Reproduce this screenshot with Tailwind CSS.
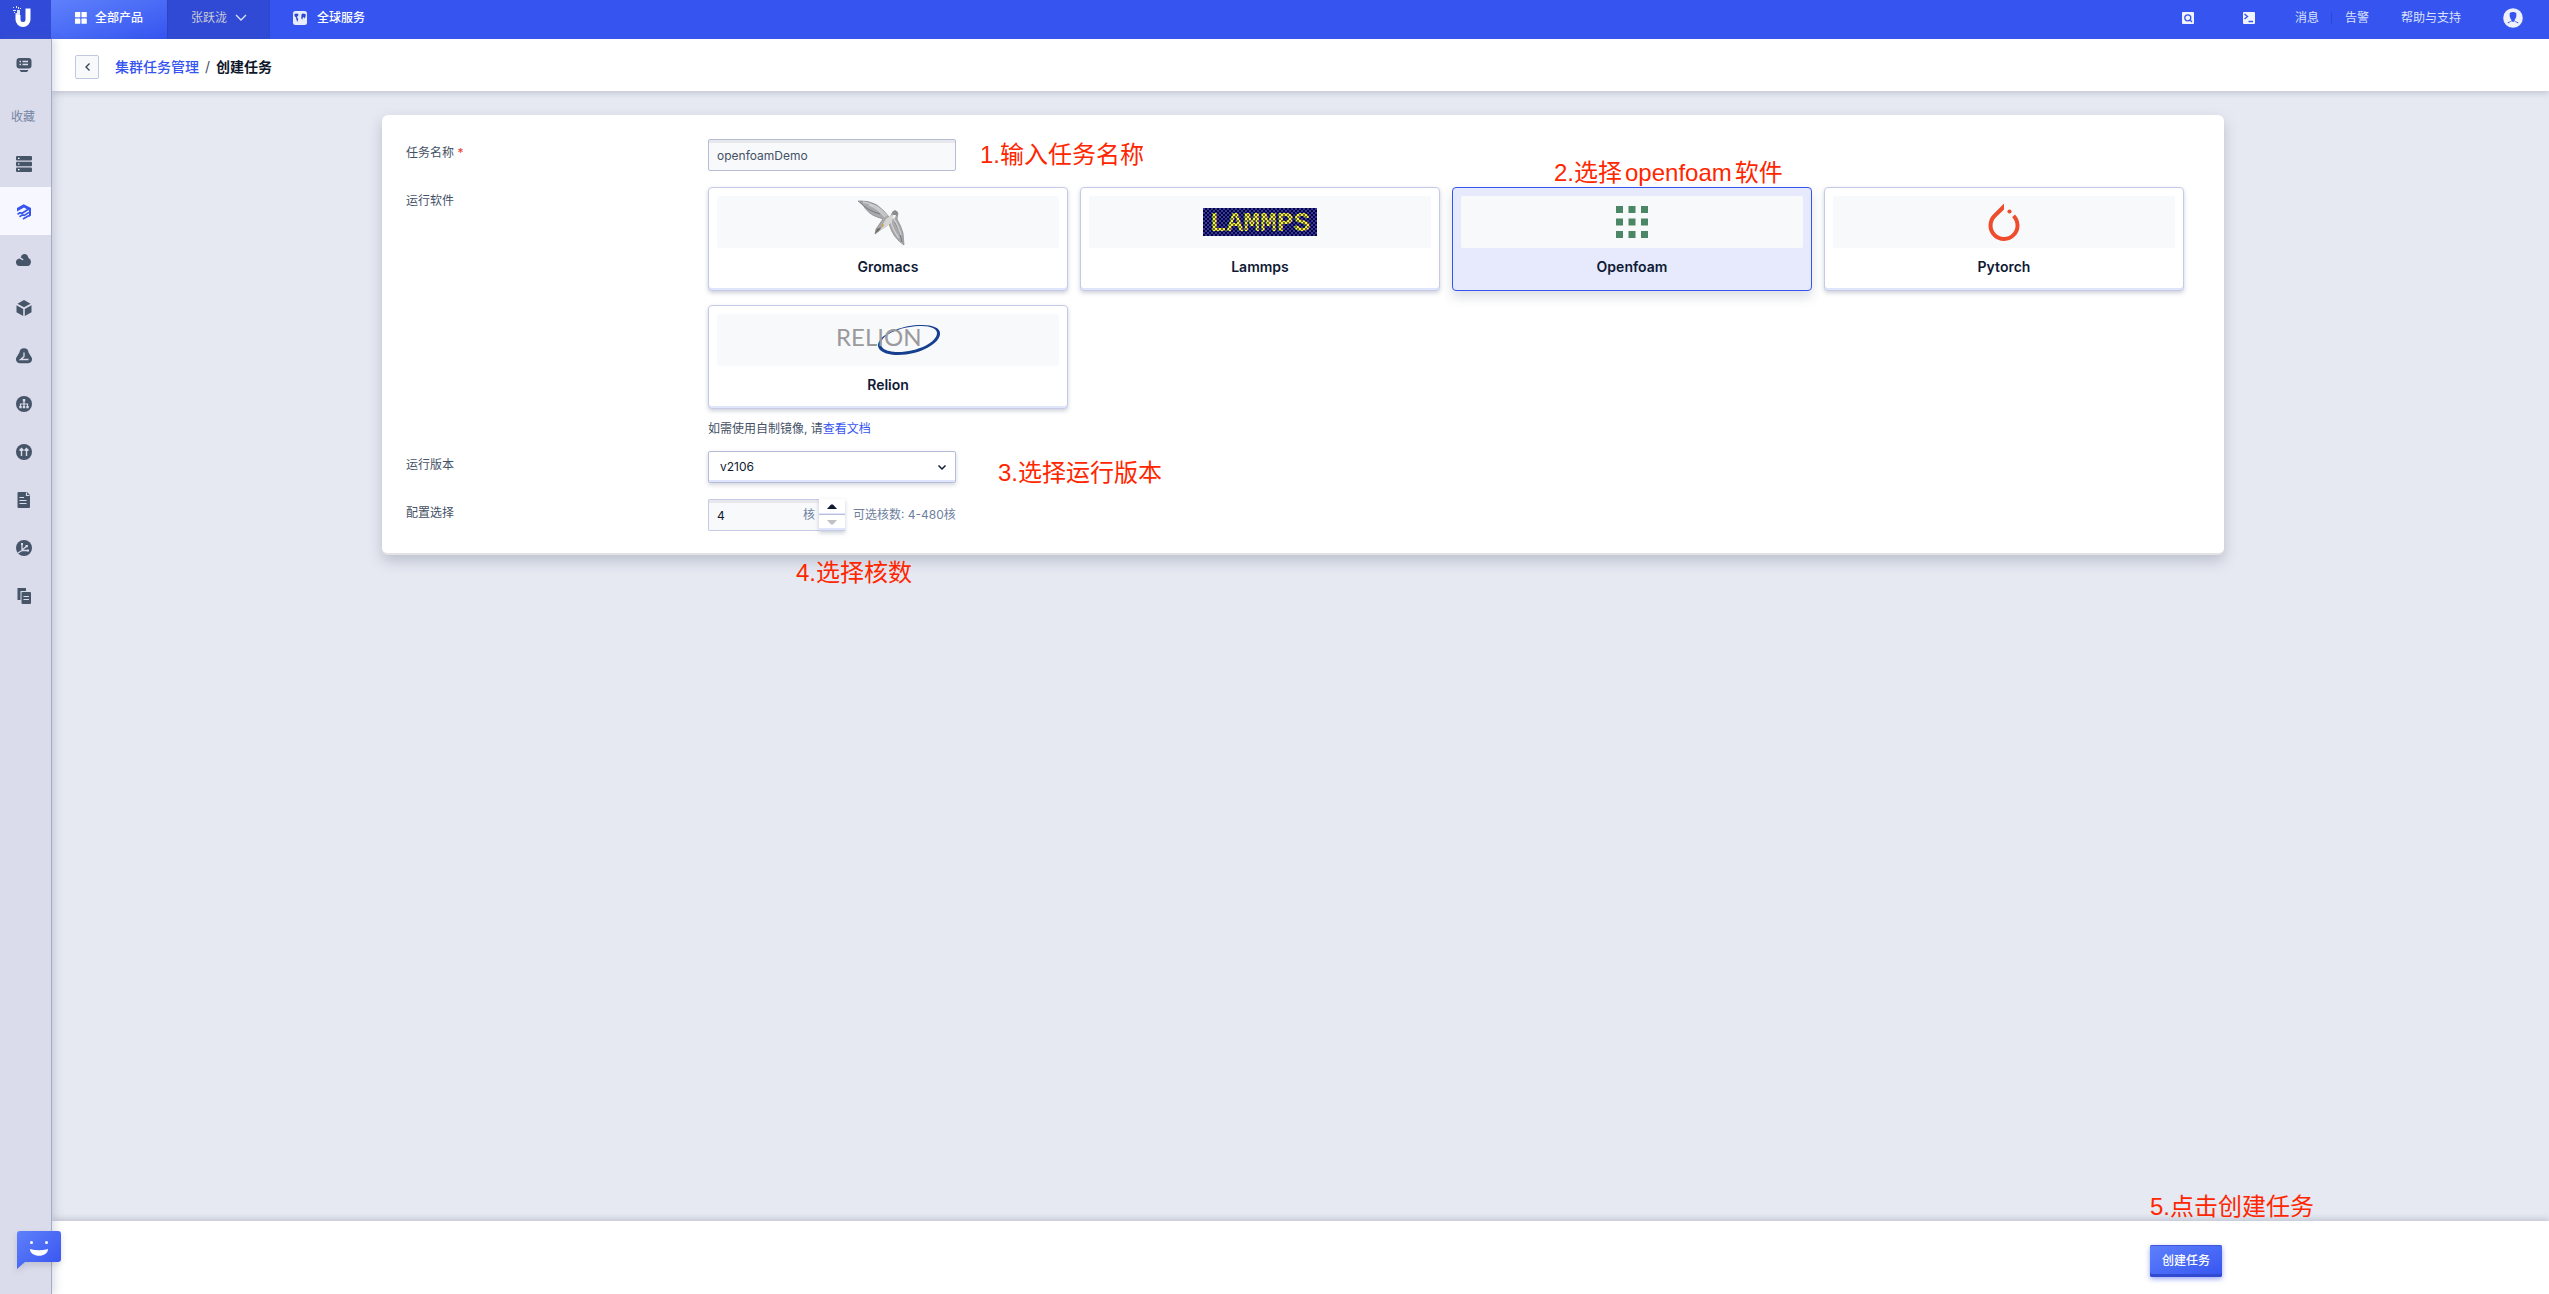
<!DOCTYPE html>
<html lang="zh-CN">
<head>
<meta charset="utf-8">
<meta name="viewport" content="width=device-width, initial-scale=1">
<title>创建任务</title>
<script src="https://cdn.jsdelivr.net/npm/@tailwindcss/browser@4"></script>
</head>
<body class="flex min-h-screen flex-col bg-[#e6e9f2] font-['Inter','Noto_Sans_CJK_SC',sans-serif] text-xs text-[#445166]">

<!-- Top bar -->
<header class="flex h-[39px] items-stretch bg-[#3654f0] text-white">
  <a href="#" aria-label="首页" class="flex w-[51px] justify-center bg-[#314bd8] pr-[6px] pt-[5px]">
    <svg class="h-6 w-5" viewBox="0 0 20 24" fill="none">
      <path d="M5 10v4.500a5 5 0 0 0 10 0V3.500" stroke="#fff" stroke-width="5"/>
      <path d="M4 5h3v5H2.500V8H4zM0 2h1v1H0zM3 1h1v2H3zM5 2h1v2H5zM0 5h3v1H0zM1 7h1v1H1zM7 3h1v1H7z" fill="#dfe4ff"/>
    </svg>
  </a>
  <a href="#" class="flex w-[117px] items-center gap-2 border-r border-[#2c44c4] bg-linear-to-br from-[#5f80fb] to-[#3654f0] pb-1 pl-6 font-medium">
    <svg class="size-3" viewBox="0 0 12 12" fill="#fff"><rect width="5.300" height="5.300" rx=".6"/><rect x="6.500" width="5.300" height="5.300" rx=".6"/><rect y="6.500" width="5.300" height="5.300" rx=".6"/><rect x="6.500" y="6.500" width="5.300" height="5.300" rx=".6"/></svg>
    全部产品
  </a>
  <button class="flex w-[102px] items-center gap-2 border-r border-[#2c48d0] bg-[#304ad6] pb-1 pl-[23px] text-[#cbccd6]">
    张跃泷
    <svg class="h-2 w-3" viewBox="0 0 12 8" fill="none" stroke="#dfe4f5" stroke-width="1.300"><path d="M1 1l5 5 5-5"/></svg>
  </button>
  <a href="#" class="flex items-center gap-[10px] pb-1 pl-[23px] font-medium">
    <svg class="size-[14px]" viewBox="0 0 14 14"><rect width="14" height="14" rx="2.500" fill="#e9ecfb"/><path d="M1.500 3L3 2.500 5.500 3 5 5 3.800 6l1.400 1.800L4.500 11 3.500 9 3 6.500 1.500 5zM8.500 3.500l1-1 3 .5.3 2-1.300 2.500-.8-1.300-1 .3-.4 2.500L8.200 7z" fill="#2f49d4"/></svg>
    全球服务
  </a>
  <nav class="ml-auto flex items-center pb-1 pr-[26px] text-[#dde3fb]">
    <button aria-label="搜索" class="mr-[49px]"><svg class="size-3" viewBox="0 0 12 12"><rect width="12" height="12" rx="1" fill="#f1f4fd"/><circle cx="5.800" cy="5.800" r="3" fill="none" stroke="#3654f0" stroke-width="1.300"/><path d="M7.800 7.800L10 10" stroke="#3654f0" stroke-width="1.300"/></svg></button>
    <button aria-label="命令行" class="mr-10"><svg class="size-3" viewBox="0 0 12 12"><rect width="12" height="12" rx="1" fill="#f1f4fd"/><path d="M1.500 2l3 2.500-3 2.500M5.500 9.500H10" fill="none" stroke="#3654f0" stroke-width="1.400"/></svg></button>
    <a href="#" class="mr-3">消息</a>
    <span class="mr-[13px] h-3 w-px bg-[#2c48d0]"></span>
    <a href="#" class="mr-8">告警</a>
    <a href="#" class="mr-[42px]">帮助与支持</a>
    <button aria-label="账户"><svg class="size-5" viewBox="0 0 20 20"><circle cx="10" cy="10" r="9.800" fill="#eef0fa"/><path d="M6.700 5Q10 3 13.300 5v3.500l-1 2.500-.8 1 .3 1 3.700 1.600-.9 1.200Q10 13.500 5.400 15.800l-.9-1.200L8.200 13l.3-1-.8-1-1-2.500z" fill="#3654f0"/><path d="M4.800 15.500L8.600 13.300 10 14l1.400-.7 3.800 2.200Q10 18.500 4.800 15.500z" fill="#eef0fa"/></svg></button>
  </nav>
</header>

<div class="flex grow">
  <!-- Product rail -->
  <aside class="relative z-10 w-[52px] shrink-0 border-r border-[#a5adc4] bg-[#dadbeb] shadow-[3px_0_8px_rgba(90,100,140,0.22)]">
    <nav class="flex flex-col text-[#475569]">
      <a href="#" aria-label="控制台" class="flex h-[52px] w-12 items-center justify-center"><svg class="size-4" viewBox="0 0 16 16"><rect x=".5" y="1" width="15" height="10.500" rx="3" fill="currentColor"/><path d="M3.500 4.500h1.500M6.500 4.500H12M3.500 7.500h1.500M6.500 7.500H12" stroke="#dadbeb" stroke-width="1.300"/><path d="M3.500 13h9l-1.500 2H5z" fill="currentColor"/></svg></a>
      <span class="flex h-12 w-[46px] items-center justify-center pt-1 text-[#7485a3]">收藏</span>
      <a href="#" aria-label="云主机" class="flex h-12 w-12 items-center justify-center pt-px"><svg class="size-4" viewBox="0 0 16 16" fill="currentColor"><rect y="0" width="16" height="4.500" rx="1"/><rect y="5.700" width="16" height="4.500" rx="1"/><rect y="11.400" width="16" height="4.500" rx="1"/><path d="M2 1.700h1.500v1.200H2zM2 7.400h1.500v1.200H2zM2 13.100h1.500v1.200H2z" fill="#fff"/></svg></a>
      <a href="#" aria-label="高性能计算" class="flex h-12 w-[51px] items-center justify-center bg-[#f6f7ff] pr-[3px] pt-0.5 text-[#3654f0]"><svg class="size-4" viewBox="0 0 16 16" fill="none" stroke="currentColor" stroke-width="1.600"><path d="M1 7.500V4l6.700-3.700L15 4v7.500l-2 1.400V6.500L8 3.500z" fill="currentColor" stroke="none"/><path d="M1.500 10.200L4 8.700l2 .6 6-3.800M3.500 12.700l3-1.800 1.800.4 4.700-3M7 15l6-3.500"/></svg></a>
      <a href="#" aria-label="云服务" class="flex h-12 w-12 items-center justify-center pt-0.5"><svg class="size-4" viewBox="0 0 16 16" fill="currentColor"><path d="M3.500 14A3.700 3.700 0 0 1 2 7l1.500-.5 3 1.800 1.200-.5-3-2.600 1-2A4.500 4.500 0 0 1 11.500 3.500L12.500 6A4.300 4.300 0 0 1 12 14z"/></svg></a>
      <a href="#" aria-label="容器" class="flex h-12 w-12 items-center justify-center pt-0.5"><svg class="size-4" viewBox="0 0 16 16" fill="currentColor"><path d="M8 0l6.500 3.700L8 7.300 1.500 3.700zM.5 5.300L7.200 9v7L.5 12.300zM15.500 5.300L8.800 9v7l6.700-3.700z"/></svg></a>
      <a href="#" aria-label="数据分析" class="flex h-12 w-12 items-center justify-center pt-0.5"><svg class="size-4" viewBox="0 0 16 16"><path d="M8 .3a4.700 4.700 0 0 1 4.600 4.200l2.700 4.500A4 4 0 0 1 12 15.300H4A4 4 0 0 1 .7 9l2.700-4.500A4.700 4.700 0 0 1 8 .3z" fill="currentColor"/><path d="M8 4.500v4L4.500 11.500h8M8 8.500l-3 3" fill="none" stroke="#dadbeb" stroke-width="1.300"/></svg></a>
      <a href="#" aria-label="网络" class="flex h-12 w-12 items-center justify-center pt-0.5"><svg class="size-4" viewBox="0 0 16 16"><circle cx="8" cy="8" r="8" fill="currentColor"/><path d="M8 4v7M4.500 11V8h7v3" fill="none" stroke="#dadbeb" stroke-width="1.200"/><path d="M6.800 3h2.400v2.400H6.800zM3.300 10h2.400v2.200H3.300zM6.800 10h2.400v2.200H6.800zM10.300 10h2.400v2.200h-2.400z" fill="#dadbeb"/></svg></a>
      <a href="#" aria-label="传输" class="flex h-12 w-12 items-center justify-center pt-0.5"><svg class="size-4" viewBox="0 0 16 16"><circle cx="8" cy="8" r="8" fill="currentColor"/><path d="M5.500 12V5M3.500 6.500l2-2 2 2M10.500 12V5M8.500 6.500l2-2 2 2" fill="none" stroke="#dadbeb" stroke-width="1.400"/></svg></a>
      <a href="#" aria-label="文档" class="flex h-12 w-12 items-center justify-center pt-0.5"><svg class="size-4" viewBox="0 0 16 16"><path d="M2.500 0H11l3 3v12a1 1 0 0 1-1 1H2.500a1 1 0 0 1-1-1V1a1 1 0 0 1 1-1z" fill="currentColor"/><path d="M3.500 5.500H8M3.500 8.500h7M3.500 11.500h7M10.500.5v3h3" fill="none" stroke="#dadbeb" stroke-width="1.200"/></svg></a>
      <a href="#" aria-label="监控" class="flex h-12 w-12 items-center justify-center pt-0.5"><svg class="size-4" viewBox="0 0 16 16"><circle cx="8" cy="8" r="8" fill="currentColor"/><path d="M6 3v7.500l-4 2.500M6 10l5-4M6 10.500h6" fill="none" stroke="#dadbeb" stroke-width="1.300"/><path d="M5 3h2v2H5zM9.500 5h2.400v2.300H9.500zM11 9.400h2v2h-2z" fill="#dadbeb"/></svg></a>
      <a href="#" aria-label="复制" class="flex h-12 w-12 items-center justify-center pt-0.5"><svg class="size-4" viewBox="0 0 16 16"><path d="M1.500 0H10v3H4.500v9h-3z" fill="currentColor"/><rect x="5.500" y="4" width="9.500" height="12" rx="1" fill="currentColor"/><path d="M7.500 8.500H13M7.500 11.500H13" stroke="#dadbeb" stroke-width="1.200"/></svg></a>
    </nav>
    <button aria-label="在线客服" class="absolute bottom-6 left-[17px] h-10 w-11 drop-shadow-md">
      <svg class="h-10 w-11" viewBox="0 0 44 40"><defs><linearGradient id="chat" x1="0" y1="0" x2="1" y2="1"><stop stop-color="#5f80fb"/><stop offset="1" stop-color="#3654f0"/></linearGradient></defs><path d="M3 1h38a3 3 0 0 1 3 3v25a3 3 0 0 1-3 3H8l-8 7V4a3 3 0 0 1 3-3z" fill="url(#chat)"/><circle cx="14.500" cy="12.500" r="1.500" fill="#fff"/><circle cx="29.500" cy="12.500" r="1.500" fill="#fff"/><path d="M13 19q9 2.500 18 0c0 9-18 9-18 0z" fill="#fff"/></svg>
    </button>
  </aside>

  <main class="flex min-w-0 grow flex-col">
    <!-- Breadcrumb -->
    <div class="flex h-[52px] items-center gap-4 bg-white pl-[23px] pt-1 shadow-[0_2px_6px_rgba(90,100,130,0.28)]">
      <button aria-label="返回" class="flex size-6 items-center justify-center rounded-xs border border-[#c3c8e2] bg-[#f8f9fb]"><svg class="h-2 w-[5px]" viewBox="0 0 5 8" fill="none" stroke="#334155" stroke-width="1.300"><path d="M4.500.5L1 4l3.500 3.500"/></svg></button>
      <nav class="flex items-center gap-[6px] text-sm"><a href="#" class="font-medium text-[#3654f0]">集群任务管理</a><span>/</span><b class="font-bold text-[#0f172a]">创建任务</b></nav>
    </div>

    <div class="grow pl-[5px] pt-6">
      <form id="job" class="mx-auto w-full max-w-[1842px] rounded-md border-b-2 border-[#e3e3e5] bg-white pb-[22px] pl-6 pr-10 pt-6 shadow-[0_6px_14px_rgba(80,85,110,0.28)]">
        <div class="relative mb-4 flex">
          <label for="name" class="w-[302px] shrink-0 leading-7">任务名称 <span class="text-[#f0382b]">*</span></label>
          <input id="name" value="openfoamDemo" class="h-8 w-[248px] rounded-xs border border-[#b5bdd4] bg-[#f8f9fb] px-2 shadow-[inset_0_3px_0_#e7e8eb]">
          <span class="ml-6 font-['Liberation_Sans','Noto_Sans_CJK_SC',sans-serif] text-2xl leading-8 text-[#ff2600]">1.输入任务名称</span>
        </div>

        <fieldset class="mb-3 flex">
          <legend class="float-left w-[302px] shrink-0 leading-7">运行软件</legend>
          <div class="grow">
            <div class="grid grid-cols-4 gap-x-3 gap-y-[14px] text-sm font-semibold text-[#0f1a35]">
              <label class="flex h-[104px] flex-col rounded-sm border border-[#c6cae6] bg-white p-2 text-center shadow-[inset_0_-2px_0_#dfe5fb,0_2px_4px_rgba(80,90,120,0.28)]">
                <input type="radio" name="software" class="sr-only">
                <span class="mb-[9px] flex h-[52px] items-center justify-center rounded-xs bg-[#f8f9fb] pr-px">
                  <svg class="h-12 w-[60px]" viewBox="0 0 60 48"><path d="M0 3Q10 2 19 7q7 5 13 13l2-5 3-2 3 2-1 6q4 7 6 14l1 12Q35 40 31 26l-6 4-8 6 1-5 7-10-6-2q-9-3-14-12z" fill="#a9a9ac" stroke="#85868a" stroke-width=".7"/><path d="M2 4q6 8 20 12M37 24q5 8 7 20" fill="none" stroke="#77787d"/><path d="M5 4q14 2 24 14M11 7q9 3 16 12M36 21q4 6 7 16M33 24q2 8 8 16" fill="none" stroke="#ceced1" stroke-width="1.400"/><path d="M28 21l7-5-1 8-7 6-5 2 3-6z" fill="#d6d5d3"/><path d="M34 14l3-2 3 2-1 4-4 0z" fill="#8c8c90"/><path d="M35 17h3l-1 3-3 1z" fill="#f2f1ee"/><path d="M24 29l-7 7 2-5z" fill="#6a6359"/><path d="M24 25l2 2-2 3z" fill="#c3a24b"/></svg>
                </span>Gromacs
              </label>
              <label class="flex h-[104px] flex-col rounded-sm border border-[#c6cae6] bg-white p-2 text-center shadow-[inset_0_-2px_0_#dfe5fb,0_2px_4px_rgba(80,90,120,0.28)]">
                <input type="radio" name="software" class="sr-only">
                <span class="mb-[9px] flex h-[52px] items-center justify-center rounded-xs bg-[#f8f9fb]">
                  <svg class="h-7 w-[114px] overflow-visible" viewBox="0 0 114 28"><defs><pattern id="blue" width="4" height="4" patternUnits="userSpaceOnUse"><rect width="4" height="4" fill="#08081c"/><path d="M0 0h2v2H0zM2 2h2v2H2z" fill="#3434bc"/></pattern><pattern id="gold" width="4" height="4" patternUnits="userSpaceOnUse"><rect width="4" height="4" fill="#6d6a24"/><path d="M0 0h2v2H0zM2 2h2v2H2z" fill="#f5f046"/></pattern></defs><rect width="114" height="28" fill="url(#blue)"/><text x="57" y="23" text-anchor="middle" font-family="Liberation Mono" font-size="28" font-weight="700" fill="url(#gold)">LAMMPS</text></svg>
                </span>Lammps
              </label>
              <div class="relative">
                <label class="flex h-[104px] flex-col rounded-sm border border-[#3654f0] bg-[#e6eafc] p-2 text-center shadow-[0_6px_12px_rgba(80,90,120,0.2)]">
                  <input type="radio" name="software" checked class="sr-only">
                  <span class="mb-[9px] flex h-[52px] items-center justify-center rounded-xs bg-[#f8f9fb]">
                    <svg class="size-8" viewBox="0 0 32 32" fill="#4b8766"><path d="M0 0h7v7H0zM12.500 0h7v7h-7zM25 0h7v7h-7zM0 12.500h7v7H0zM12.500 12.500h7v7h-7zM25 12.500h7v7h-7zM0 25h7v7H0zM12.500 25h7v7h-7zM25 25h7v7h-7z"/></svg>
                  </span>Openfoam
                </label>
                <span class="absolute bottom-full left-[102px] whitespace-nowrap font-['Liberation_Sans','Noto_Sans_CJK_SC',sans-serif] text-2xl leading-7 font-normal text-[#ff2600]">2.选择<span class="mx-[3px]">openfoam</span>软件</span>
              </div>
              <label class="flex h-[104px] flex-col rounded-sm border border-[#c6cae6] bg-white p-2 text-center shadow-[inset_0_-2px_0_#dfe5fb,0_2px_4px_rgba(80,90,120,0.28)]">
                <input type="radio" name="software" class="sr-only">
                <span class="mb-[9px] flex h-[52px] items-center justify-center rounded-xs bg-[#f8f9fb]">
                  <svg class="h-[38px] w-8" viewBox="0 0 32 38"><path d="M16 .5v6L8 14.300a11.500 11.500 0 1 0 16.400.3l-.3-.4 2.800-2.800A15.500 15.500 0 1 1 5 11.500z" fill="#ee4c2c"/><circle cx="21.500" cy="8.500" r="2.100" fill="#ee4c2c"/></svg>
                </span>Pytorch
              </label>
              <label class="flex h-[104px] flex-col rounded-sm border border-[#c6cae6] bg-white p-2 text-center shadow-[inset_0_-2px_0_#dfe5fb,0_2px_4px_rgba(80,90,120,0.28)]">
                <input type="radio" name="software" class="sr-only">
                <span class="mb-[9px] flex h-[52px] items-center justify-center rounded-xs bg-[#f8f9fb]">
                  <svg class="h-8 w-[104px] overflow-visible" viewBox="0 0 104 32"><path d="M104 9C105 19 84 31 62 31 46 31 38 24 44 16 49 9 66 1 86 1c11 0 18 3 18 8zm-3 0c0-4-6-7-15-7C67 2 50 9 46 16c-4 7 3 12 16 12 20 0 39-10 39-19z" fill="#173f8f" fill-rule="evenodd"/><text x="0" y="22" font-family="Lato" font-size="24" font-weight="400" fill="#9a9a9c">RELION</text></svg>
                </span>Relion
              </label>
            </div>
            <p class="mt-[10px] leading-5">如需使用自制镜像, 请<a href="#" class="text-[#3654f0]">查看文档</a></p>
          </div>
        </fieldset>

        <div class="mb-4 flex">
          <label for="version" class="w-[302px] shrink-0 leading-7">运行版本</label>
          <div class="relative h-8 w-[248px]">
            <select id="version" class="h-8 w-full appearance-none rounded-xs border border-[#b5bdd8] bg-white px-[11px] text-[#0f1a35] shadow-[inset_0_-2px_0_#dfe5fb,0_2px_4px_rgba(80,90,120,0.25)]"><option>v2106</option></select>
            <svg class="pointer-events-none absolute right-[10px] top-[13px] h-[7px] w-2" viewBox="0 0 8 7" fill="none" stroke="#0f1a35" stroke-width="1.500"><path d="M.5 1.500L4 5l3.500-3.500"/></svg>
          </div>
          <span class="ml-[42px] mt-1 -mb-2 font-['Liberation_Sans','Noto_Sans_CJK_SC',sans-serif] text-2xl leading-9 text-[#ff2600]">3.选择运行版本</span>
        </div>

        <div class="relative flex">
          <label for="cores" class="w-[302px] shrink-0 leading-7">配置选择</label>
          <div class="flex h-8 w-[111px] items-center rounded-l-xs border border-r-0 border-[#c6cae6] bg-[#f8f9fb] pr-1 shadow-[inset_0_3px_0_#e7e8eb]">
            <input id="cores" value="4" class="h-full w-0 grow bg-transparent pl-2 text-[#0f1a35]"><span class="text-[#6f7fa0]">核</span>
          </div>
          <div class="flex w-[26px] flex-col shadow-[0_2px_4px_rgba(80,90,120,0.3)]">
            <button type="button" aria-label="增加" class="flex h-4 items-center justify-center border-b border-[#b5bdd8] bg-white shadow-[inset_0_-1px_0_#dfe5fb]"><svg class="h-[5px] w-[10px]" viewBox="0 0 10 5"><path d="M0 5l4-4.500h2L10 5z" fill="#0f1a35"/></svg></button>
            <button type="button" aria-label="减少" class="flex h-4 items-center justify-center border-b border-[#c6cae6] bg-white shadow-[inset_0_-2px_0_#dfe5fb]"><svg class="h-[5px] w-[10px]" viewBox="0 0 10 5"><path d="M0 0l4 4.500h2L10 0z" fill="#bfc1c6"/></svg></button>
          </div>
          <span class="ml-2 leading-8 text-[#6f7fa0]">可选核数: 4-480核</span>
          <span class="absolute left-[390px] top-14 whitespace-nowrap font-['Liberation_Sans','Noto_Sans_CJK_SC',sans-serif] text-2xl leading-9 text-[#ff2600]">4.选择核数</span>
        </div>
      </form>
    </div>

    <!-- Action bar -->
    <footer class="h-[73px] bg-white pl-[5px] pt-6 shadow-[0_-2px_6px_rgba(90,100,130,0.28)]">
      <div class="mx-auto flex w-full max-w-[1842px] justify-end pr-[2px]">
        <div class="relative">
          <button form="job" class="h-8 w-[72px] rounded-xs bg-linear-to-br from-[#5f80fb] to-[#3654f0] font-medium text-white shadow-[inset_0_1px_0_#3f57d8,inset_0_-3px_0_#314bd0,0_2px_5px_rgba(54,84,240,0.5)]">创建任务</button>
          <span class="absolute bottom-[52px] left-0 whitespace-nowrap font-['Liberation_Sans','Noto_Sans_CJK_SC',sans-serif] text-2xl leading-9 text-[#ff2600]">5.点击创建任务</span>
        </div>
      </div>
    </footer>
  </main>
</div>
</body>
</html>
